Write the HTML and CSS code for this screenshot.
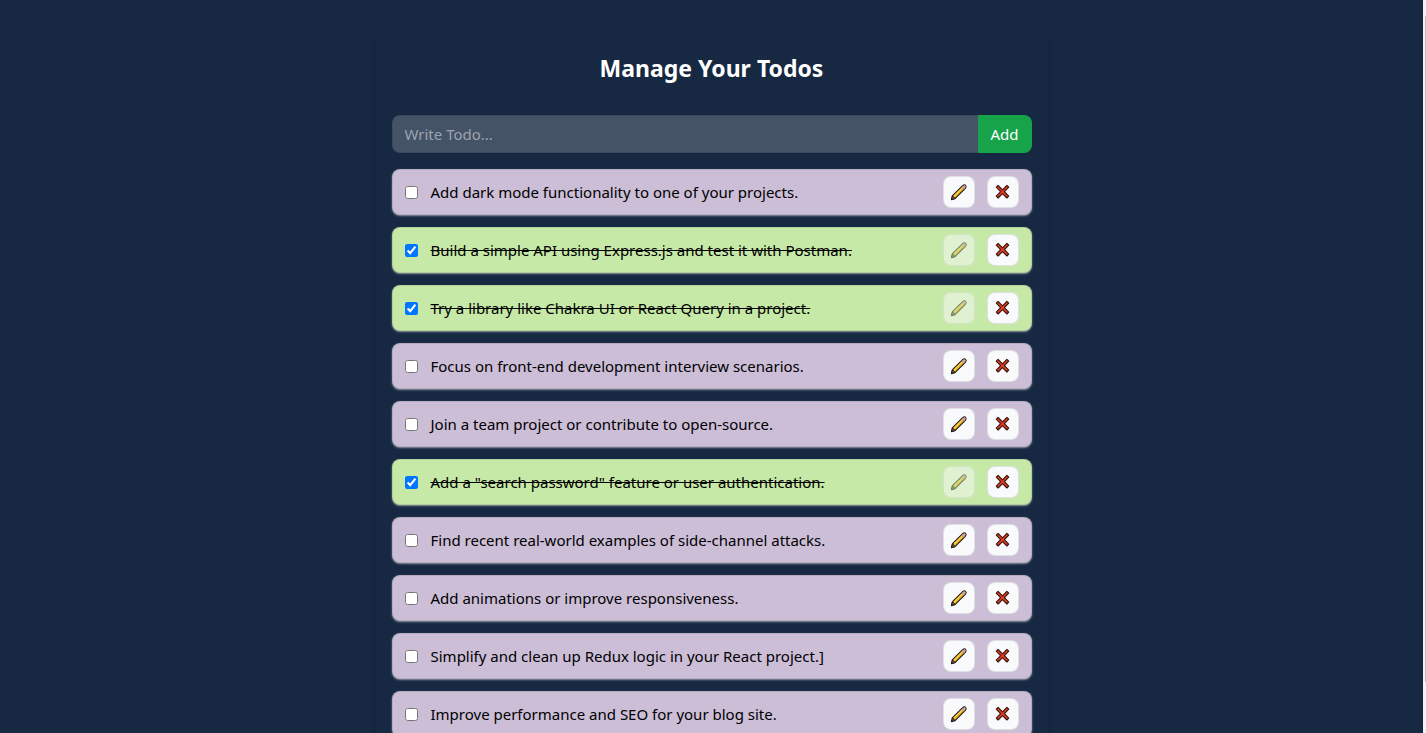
FILE: index.html
```html
<!DOCTYPE html>
<html lang="en">
<head>
<meta charset="utf-8">
<title>Manage Your Todos</title>
<link rel="stylesheet" href="styles.css">
</head>
<body>
<svg class="sprite" aria-hidden="true">
  <symbol id="pencil" viewBox="0 0 18 18">
    <path d="M1.4 16.6 L2.3 12.9 L12.7 2.6 Q14.4 1.2 15.6 2.3 Q16.8 3.6 15.3 5.3 L5 15.6 Z" fill="#f3b91d" stroke="#1b1418" stroke-width="1.1" stroke-linejoin="round"/>
    <path d="M12.2 3.7 L13.1 2.9 Q14.5 1.8 15.3 2.6 Q16 3.6 14.9 5 L14.2 5.7 Z" fill="#dba0a4"/>
    <path d="M11.4 4.5 L12.2 3.7 L14.2 5.7 L13.4 6.5 Z" fill="#a9a5b8"/>
    <path d="M3.8 13 L12 4.9" stroke="#fbe06a" stroke-width="1"/>
    <path d="M1.6 16.4 L2.5 13.1 Q4.2 13.6 4.8 15.4 Z" fill="#7d5c40" stroke="#1b1418" stroke-width=".7"/>
  </symbol>
  <symbol id="cross" viewBox="0 0 18 18">
    <path d="M4.1 2.4 L8.5 6.8 L12.9 2.4 L14.7 4.2 L10.4 8.7 L14.7 13.2 L12.9 15 L8.5 10.6 L4.1 15 L2.3 13.2 L6.6 8.7 L2.3 4.2 Z" fill="#e23c20" stroke="#35130f" stroke-width="1.1" stroke-linejoin="round"/>
  </symbol>
</svg>
<div class="app">
  <main class="page">
    <section class="card">
      <h1 class="title">Manage Your Todos</h1>
      <form class="todo-form">
        <input class="todo-input" type="text" placeholder="Write Todo..." aria-label="New todo">
        <button class="add-button" type="button">Add</button>
      </form>
      <ul class="todo-list" id="todo-list"></ul>
    </section>
  </main>
  <div class="scrollbar" aria-hidden="true"><div class="thumb"></div></div>
</div>
<script src="app.js"></script>
</body>
</html>
```
FILE: styles.css
```css
* { box-sizing: border-box; }
body {
  margin: 0;
  background: #172842;
  color: #fff;
  font: 15px/24px "Segoe UI", "Noto Sans", "Open Sans", sans-serif;
}
.sprite { position: absolute; width: 0; height: 0; }
.app { display: flex; height: 100vh; }
.page { flex: 1; min-width: 0; padding: 32px 0; overflow-y: auto; scrollbar-width: none; }
.card {
  max-width: 672px;
  margin: 0 auto;
  padding: 20px 16px 12px;
  border-radius: 8px;
  box-shadow: 0 4px 6px -1px rgb(0 0 0 / 10%), 0 2px 4px -2px rgb(0 0 0 / 10%);
}
.title { margin: 0 0 31px; font-size: 23px; line-height: 32px; font-weight: 700; text-align: center; }
.todo-form { display: flex; margin: 0 0 16px; }
.todo-input {
  flex: 1;
  min-width: 0;
  padding: 6px 12px;
  border: 1px solid rgb(0 0 0 / 10%);
  border-right: 0;
  border-radius: 8px 0 0 8px;
  background: rgb(255 255 255 / 20%);
  color: #fff;
  font: inherit;
  outline: none;
}
.todo-input::placeholder { color: #9ca3af; opacity: 1; }
.add-button {
  min-width: 54px;
  padding: 6px 12px;
  border: 0;
  border-radius: 0 8px 8px 0;
  background: #16a34a;
  color: #fff;
  font: inherit;
}
.todo-list { display: flex; flex-direction: column; gap: 12px; margin: 0; padding: 0; list-style: none; }
.todo {
  display: flex;
  align-items: center;
  gap: 12px;
  padding: 6px 12px;
  border: 1px solid rgb(0 0 0 / 10%);
  border-radius: 8px;
  background: #ccbed7;
  color: #000;
  box-shadow: 0 1px 2px rgb(255 255 255 / 50%);
}
.todo.done { background: #c6e9a7; }
.check { width: 13px; height: 13px; margin: 0; }
.text { flex: 1; min-width: 0; padding-left: 1px; }
.done .text { text-decoration: line-through; }
.icon-button {
  display: flex;
  align-items: center;
  justify-content: center;
  width: 32px;
  height: 32px;
  padding: 0;
  border: 1px solid rgb(0 0 0 / 10%);
  border-radius: 8px;
  background: #f9fafb;
}
.icon-button:disabled { opacity: .5; }
.icon { width: 18px; height: 18px; }
.scrollbar { width: 3px; padding: 16px 0 51px 2px; background: #f1f2f6; }
.thumb { height: 100%; background: #c1c1c1; }
```
FILE: app.js
```js
const todos = [
  ["Add dark mode functionality to one of your projects.", false],
  ["Build a simple API using Express.js and test it with Postman.", true],
  ["Try a library like Chakra UI or React Query in a project.", true],
  ["Focus on front-end development interview scenarios.", false],
  ["Join a team project or contribute to open-source.", false],
  ["Add a \"search password\" feature or user authentication.", true],
  ["Find recent real-world examples of side-channel attacks.", false],
  ["Add animations or improve responsiveness.", false],
  ["Simplify and clean up Redux logic in your React project.]", false],
  ["Improve performance and SEO for your blog site.", false]
];
document.getElementById("todo-list").innerHTML = todos.map(([text, done], i) => `
  <li class="todo${done ? " done" : ""}">
    <input class="check" type="checkbox" id="todo-${i}"${done ? " checked" : ""}>
    <label class="text" for="todo-${i}">${text}</label>
    <button class="icon-button" type="button" aria-label="Edit"${done ? " disabled" : ""}><svg class="icon"><use href="#pencil"/></svg></button>
    <button class="icon-button" type="button" aria-label="Delete"><svg class="icon"><use href="#cross"/></svg></button>
  </li>`).join("");
```
